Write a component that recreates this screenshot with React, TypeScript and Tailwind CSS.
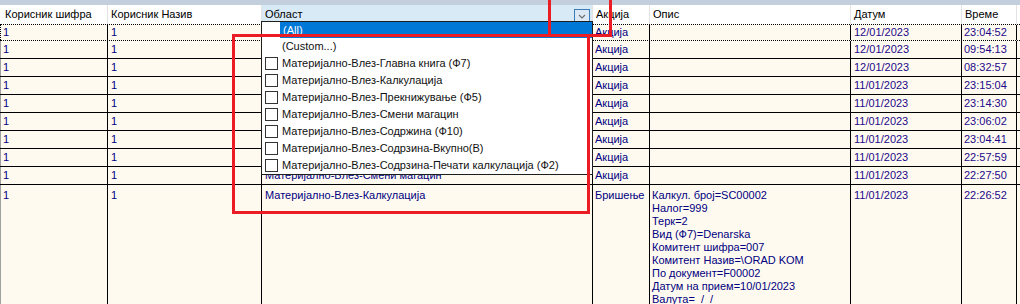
import React from 'react';

const widths = ['w-[107px]', 'w-[154px]', 'w-[331px]', 'w-[57px]', 'w-[201px]', 'w-[111px]', 'w-[55px]'];
const pads = ['pl-[2px]', 'pl-[3px]', 'pl-[3px]', 'pl-[2px]', 'pl-[2px]', 'pl-[3px]', 'pl-[2px]'];

const headers = ['Корисник шифра', 'Корисник Назив', 'Област', 'Акција', 'Опис', 'Датум', 'Време'];

const rows = [
  ['12/01/2023', '23:04:52'],
  ['12/01/2023', '09:54:13'],
  ['12/01/2023', '08:32:57'],
  ['11/01/2023', '23:15:04'],
  ['11/01/2023', '23:14:30'],
  ['11/01/2023', '23:06:02'],
  ['11/01/2023', '23:04:41'],
  ['11/01/2023', '22:57:59'],
  ['11/01/2023', '22:27:50'],
];

const opis = [
  'Калкул. број=SC00002',
  'Налог=999',
  'Терк=2',
  'Вид (Ф7)=Denarska',
  'Комитент шифра=007',
  'Комитент Назив=\\ORAD KOM',
  'По документ=F00002',
  'Датум на прием=10/01/2023',
  'Валута=  /  /',
];

const items = [
  'Материјално-Влез-Главна книга (Ф7)',
  'Материјално-Влез-Калкулација',
  'Материјално-Влез-Прекнижување (Ф5)',
  'Материјално-Влез-Смени магацин',
  'Материјално-Влез-Содржина (Ф10)',
  'Материјално-Влез-Содрзина-Вкупно(В)',
  'Материјално-Влез-Содрзина-Печати калкулација (Ф2)',
];

function Row({ cells, first, last }: { cells: React.ReactNode[]; first?: boolean; last?: boolean }) {
  const rowCls = first
    ? 'h-[17px] border-y border-dotted border-black'
    : last
    ? 'flex-1'
    : 'h-[18px] border-b border-black';
  return (
    <div className={`flex shrink-0 ${rowCls}`}>
      <div className={`w-px ${first ? 'border-l border-dotted border-black' : 'bg-[#a0a0a0]'}`} />
      {cells.map((c, i) => (
        <div
          key={i}
          className={`${widths[i]} ${pads[i]} shrink-0 border-r border-black overflow-hidden whitespace-pre ${
            i >= 5 ? 'text-[#22088a]' : 'text-[#000080]'
          } ${last ? 'pt-[4px]' : 'flex items-center'}`}
        >
          {c}
        </div>
      ))}
      <div className="flex-1" />
    </div>
  );
}

export default function App() {
  return (
    <div className="relative w-[1020px] h-[304px] overflow-hidden bg-[#fffaf0] font-['Liberation_Sans',Arial,sans-serif] text-[11px] leading-[13px] flex flex-col">
      {/* top strip */}
      <div className="h-[5px] shrink-0 bg-[#c3cfdc]" />

      {/* header */}
      <div className="h-[19px] shrink-0 flex bg-white text-black">
        <div className="w-px" />
        {headers.map((h, i) => (
          <div
            key={h}
            className={`${widths[i]} shrink-0 flex items-center border-r border-[#e3e3e3] ${
              i === 0 ? 'pl-[4px]' : 'pl-[3px]'
            } ${i === 2 ? 'bg-[#d9eaf7] justify-between pr-[2px]' : ''}`}
          >
            <span>{h}</span>
            {i === 2 && (
              <svg width="16" height="14" viewBox="0 0 16 14" className="mt-[3px]">
                <rect x="0.5" y="0.5" width="15" height="13" fill="#dce9f5" stroke="#3c7ab8" />
                <path d="M5 6 L8 9 L11 6" fill="none" stroke="#707070" strokeWidth="1.2" />
              </svg>
            )}
          </div>
        ))}
        <div className="flex-1" />
      </div>

      {rows.map((r, i) => (
        <Row
          key={i}
          first={i === 0}
          cells={[
            '1',
            '1',
            i === 8 ? 'Материјално-Влез-Смени магацин' : '',
            'Акција',
            '',
            r[0],
            r[1],
          ]}
        />
      ))}
      <Row
        last
        cells={[
          '1',
          '1',
          'Материјално-Влез-Калкулација',
          'Бришење',
          <div className="flex flex-col">
            {opis.map((l) => (
              <span key={l}>{l}</span>
            ))}
          </div>,
          '11/01/2023',
          '22:26:52',
        ]}
      />

      {/* dropdown list */}
      <div className="absolute left-[261px] top-[21px] w-[332px] bg-white border border-[#1e1e1e] text-[#111] flex flex-col">
        <div className="h-[16px] flex">
          <div className="w-[18px]" />
          <div className="flex-1 bg-[#0078d7] text-white flex items-center pl-[3px]">(All)</div>
        </div>
        <div className="h-[17px] flex items-center pl-[20px]">(Custom...)</div>
        {items.map((t) => (
          <div key={t} className="h-[17px] flex items-center">
            <div className="ml-[3px] w-[13px] h-[13px] border border-[#333] bg-white" />
            <span className="ml-[4px]">{t}</span>
          </div>
        ))}
      </div>

      {/* red annotation marks */}
      <div className="absolute left-[548px] top-0 w-[3px] h-[37px] bg-[#ec1c24]" />
      <div className="absolute left-[609px] top-0 w-[3px] h-[37px] bg-[#ec1c24]" />
      <div className="absolute left-[232px] top-[34px] w-[380px] h-[3px] bg-[#ec1c24]" />
      <div className="absolute left-[232px] top-[34px] w-[3px] h-[180px] bg-[#ec1c24]" />
      <div className="absolute left-[587px] top-[34px] w-[3px] h-[180px] bg-[#ec1c24]" />
      <div className="absolute left-[232px] top-[211px] w-[358px] h-[3px] bg-[#ec1c24]" />
    </div>
  );
}
